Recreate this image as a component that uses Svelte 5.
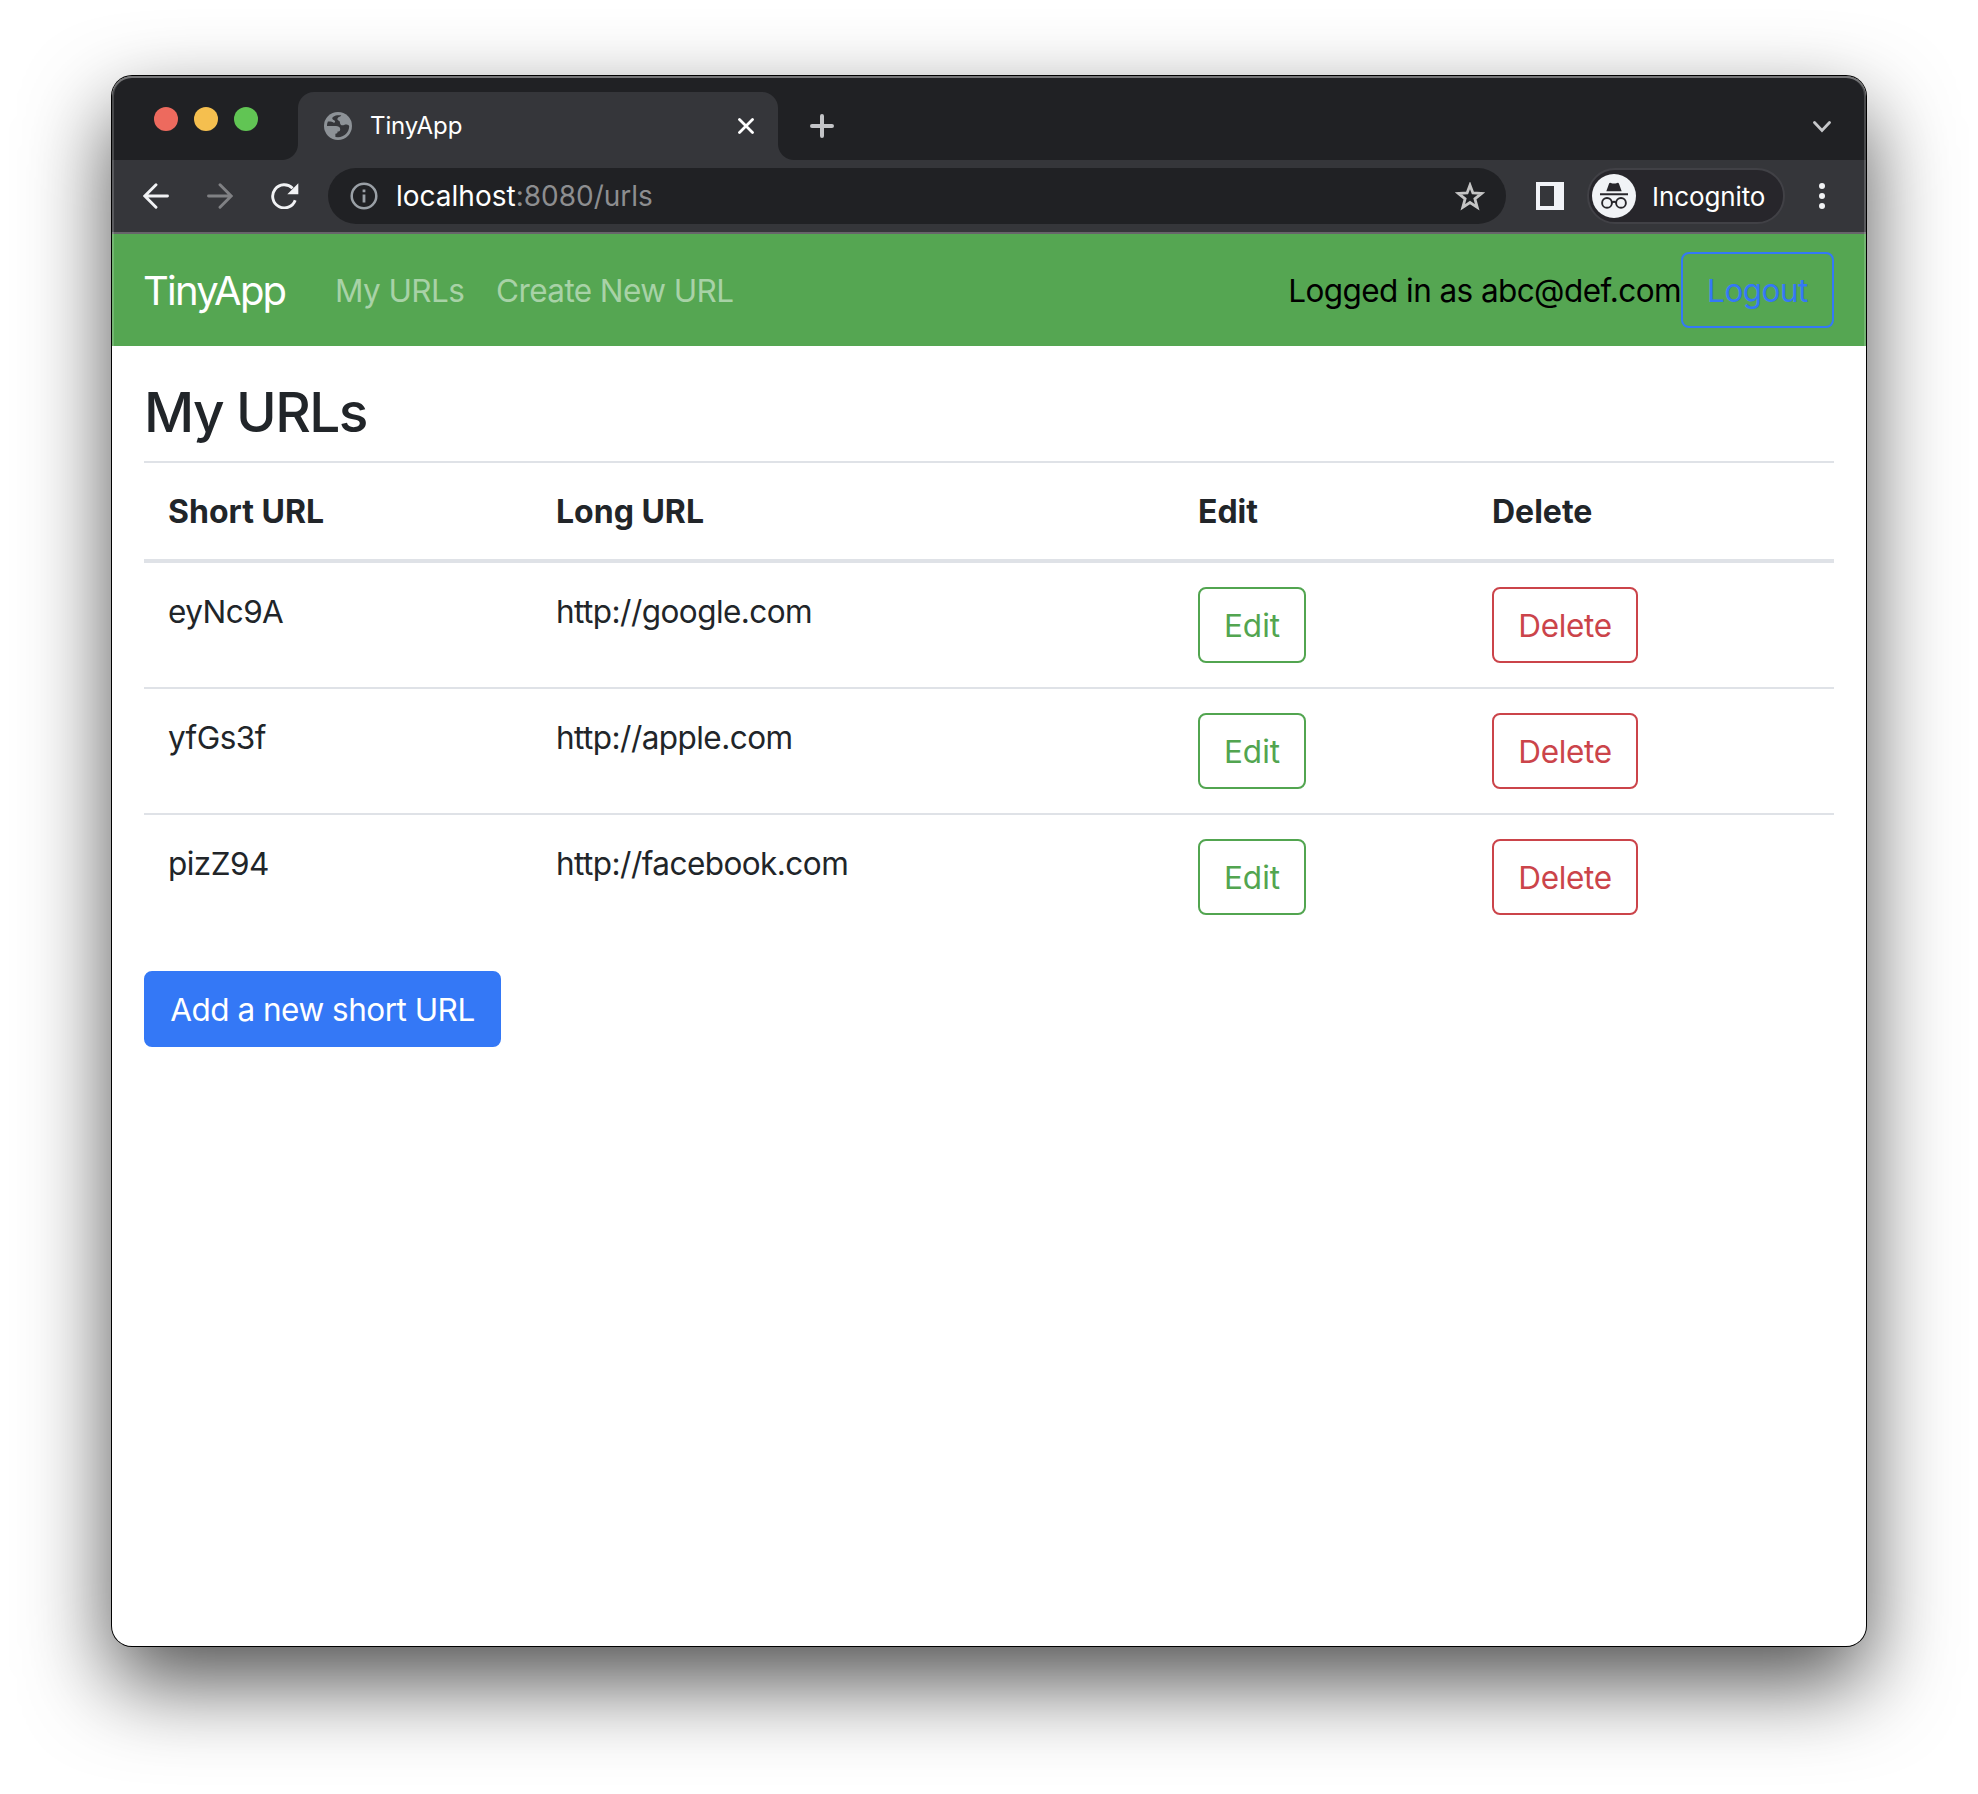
<script>
  const rows = [
    { short: 'eyNc9A', long: 'http://google.com' },
    { short: 'yfGs3f', long: 'http://apple.com' },
    { short: 'pizZ94', long: 'http://facebook.com' }
  ];
</script>

<div class="desktop">
  <div class="window">
    <div class="tabstrip">
      <div class="lights">
        <span class="light red"></span>
        <span class="light yellow"></span>
        <span class="light green"></span>
      </div>
      <div class="tab">
        <svg class="globe" viewBox="0 0 28 28">
          <circle cx="14" cy="14" r="14" fill="#8d9297" />
          <path d="M17.300 3.300C16.600 5 14.400 4.800 13.600 6.200C12.900 7.600 14 8.500 15.300 9C16.400 9.500 15.500 11.600 16.800 12.800C18.300 14.200 20.300 12.600 22 12.600C23.500 12.600 24.600 13.200 25.200 14C25.200 20.300 20.200 25.200 14 25.200L11.400 24.900L11.400 21.800C13 21.800 13.600 21 13.600 19.600C15.600 19.600 16.300 18.600 16.200 17C16 14.800 14 14 12 14L3 14C2.900 12.400 3.200 11 3.900 9.600C6 9.500 7.600 9.200 9 10.200C10.400 11.200 11.200 10.600 11 9.300C10.800 8 8.600 8.300 8.300 6.500C8 5 11 2.500 17.300 3.300Z" fill="#35363a" />
        </svg>
        <span class="tab-title">TinyApp</span>
        <svg class="close" viewBox="0 0 16 16"><path d="M1.500 1.500L14.500 14.500M14.500 1.500L1.500 14.500" stroke="#fff" stroke-width="2.800" stroke-linecap="round" /></svg>
      </div>
      <svg class="plus" viewBox="0 0 24 24"><path d="M12 2V22M2 12H22" stroke="#c3c4c7" stroke-width="4" stroke-linecap="round" /></svg>
      <svg class="chevron" viewBox="0 0 18 12"><path d="M1.500 1.500L9 9.500L16.500 1.500" fill="none" stroke="#c6c7ca" stroke-width="2.800" stroke-linecap="round" /></svg>
    </div>

    <div class="toolbar">
      <svg class="arrow" viewBox="0 0 26 26"><path d="M24.500 13H2M13 1.800L1.800 13L13 24.200" fill="none" stroke="#f1f2f4" stroke-width="2.900" stroke-linecap="round" /></svg>
      <svg class="arrow forward" viewBox="0 0 26 26"><path d="M1.500 13H24M13 1.800L24.200 13L13 24.200" fill="none" stroke="#808184" stroke-width="2.900" stroke-linecap="round" /></svg>
      <svg class="reload" viewBox="0 0 28 26"><path d="M24.200 17.200A11.600 11.600 0 1 1 21.600 5.200" fill="none" stroke="#f1f2f4" stroke-width="2.900" /><path d="M27.300 .3V11.300H16.300Z" fill="#f1f2f4" /></svg>
      <div class="omnibox">
        <svg class="info" viewBox="0 0 28 28"><circle cx="14" cy="14" r="12.300" fill="none" stroke="#9aa0a6" stroke-width="2.500" /><path d="M14 12.500V20.500M14 7.500V10.300" stroke="#9aa0a6" stroke-width="2.800" /></svg>
        <span class="url"><b>localhost</b>:8080/urls</span>
        <svg class="star" viewBox="0 0 30 29"><path d="M15 3.200L17.900 11L26.600 11.400L19.900 16.800L22.200 25.300L15 20.500L7.800 25.300L10.100 16.800L3.400 11.400L12.100 11Z" fill="none" stroke="#c4c4c4" stroke-width="2.800" /></svg>
      </div>
      <svg class="panel" viewBox="0 0 28 28"><path fill-rule="evenodd" d="M0 0H28V28H0ZM4 4V24H18V4Z" fill="#f1f3f7" /></svg>
      <div class="incognito">
        <svg class="spy" viewBox="0 0 44 44">
          <circle cx="22" cy="22" r="22" fill="#f1f3f6" />
          <path d="M14.300 17.300L17 9.800Q17.500 8.500 18.900 9Q22 10.200 25.100 9Q26.500 8.500 27 9.800L29.700 17.300Z" fill="#27262b" />
          <path d="M8 20.200H36" stroke="#27262b" stroke-width="2" />
          <g fill="none" stroke="#27262b" stroke-width="1.900"><circle cx="15" cy="28.900" r="4.900" /><circle cx="29" cy="28.900" r="4.900" /><path d="M19.800 28.700Q22 27 24.200 28.700" /></g>
        </svg>
        <span>Incognito</span>
      </div>
      <svg class="dots" viewBox="0 0 6 32"><g fill="#f1f2f4"><circle cx="3" cy="6" r="3" /><circle cx="3" cy="16" r="3" /><circle cx="3" cy="26" r="3" /></g></svg>
    </div>

    <nav class="navbar">
      <span class="brand">TinyApp</span>
      <span class="nav-link first">My URLs</span>
      <span class="nav-link second">Create New URL</span>
      <span class="account">Logged in as abc@def.com</span>
      <button class="btn logout">Logout</button>
    </nav>

    <main>
      <h3>My URLs</h3>
      <table>
        <colgroup><col class="c1" /><col class="c2" /><col class="c3" /><col class="c4" /></colgroup>
        <thead>
          <tr><th>Short URL</th><th>Long URL</th><th>Edit</th><th>Delete</th></tr>
        </thead>
        <tbody>
          {#each rows as row}
            <tr>
              <td>{row.short}</td>
              <td>{row.long}</td>
              <td class="action"><button class="btn edit">Edit</button></td>
              <td class="action"><button class="btn delete">Delete</button></td>
            </tr>
          {/each}
        </tbody>
      </table>
      <button class="btn add">Add a new short URL</button>
    </main>
  </div>
</div>

<style>
  :global(body) { background: #fff; }
  * { box-sizing: border-box; }
  svg { display: block; flex: none; }
  span, h3, button, td, th { white-space: nowrap; }
  .desktop {
    width: 1978px;
    height: 1794px;
    padding: 76px 112px 0;
    overflow: hidden;
    font-family: Inter, 'Liberation Sans', sans-serif;
    font-weight: 400;
  }
  .window {
    position: relative;
    display: flex;
    flex-direction: column;
    height: 1570px;
    border-radius: 20px;
    overflow: hidden;
    background: #fff;
    box-shadow: 0 0 0 1px #000, 0 36px 86px rgba(0, 0, 0, .69);
  }
  /* light rim that lies over the window's edge */
  .window::after {
    content: '';
    position: absolute;
    inset: 0;
    border-radius: 20px;
    box-shadow: inset 0 2px 0 rgba(255, 255, 255, .25), inset 0 0 0 2px rgba(255, 255, 255, .18);
    pointer-events: none;
  }
  .tabstrip {
    display: flex;
    flex: none;
    height: 84px;
    padding-left: 42px;
    background: #202124;
  }
  .lights { display: flex; gap: 16px; width: 144px; padding-top: 31px; }
  .light { width: 24px; height: 24px; border-radius: 50%; }
  .red { background: #ed6a5e; }
  .yellow { background: #f5bf4f; }
  .green { background: #61c554; }
  .tab {
    position: relative;
    display: flex;
    align-items: center;
    width: 480px;
    height: 68px;
    margin-top: 16px;
    padding: 0 24px 0 26px;
    border-radius: 16px 16px 0 0;
    background: #35363a;
  }
  .tab::before, .tab::after {
    content: '';
    position: absolute;
    bottom: 0;
    width: 16px;
    height: 16px;
  }
  .tab::before { left: -16px; background: radial-gradient(circle at 0 0, #202124 15.500px, #35363a 16.500px); }
  .tab::after { right: -16px; background: radial-gradient(circle at 100% 0, #202124 15.500px, #35363a 16.500px); }
  .globe { width: 28px; height: 28px; }
  .tab-title { margin-left: 18px; padding-bottom: 2px; color: #fff; font-size: 24px; letter-spacing: -.1px; }
  .close { width: 16px; height: 16px; margin-left: auto; }
  .plus { width: 24px; height: 24px; margin: 38px 0 0 32px; }
  .chevron { width: 18px; height: 12px; margin: 45px 35px 0 auto; }
  .toolbar {
    display: flex;
    flex: none;
    align-items: center;
    height: 74px;
    padding-left: 31px;
    border-bottom: 2px solid #67646a;
    background: #35363a;
  }
  .arrow { width: 26px; height: 26px; }
  .forward { margin-left: 38px; }
  .reload { width: 28px; height: 26px; margin-left: 38px; }
  .omnibox {
    display: flex;
    align-items: center;
    width: 1178px;
    height: 56px;
    margin-left: 29px;
    padding: 0 21px 0 22px;
    border-radius: 28px;
    background: #202124;
  }
  .info { width: 28px; height: 28px; }
  .url { margin-left: 18px; color: #8d8e90; font-size: 28px; }
  .url b { color: #fff; font-weight: inherit; }
  .star { width: 30px; height: 29px; margin-left: auto; }
  .panel { width: 28px; height: 28px; margin-left: 30px; }
  .incognito {
    display: flex;
    align-items: center;
    width: 198px;
    height: 56px;
    margin-left: 23px;
    padding-left: 3px;
    border: 2px solid #414146;
    border-radius: 28px;
    background: #27262b;
    color: #fff;
    font-size: 26px;
    letter-spacing: -.1px;
  }
  .spy { width: 44px; height: 44px; margin-right: 16px; }
  .dots { width: 6px; height: 32px; margin-left: 34px; }
  .navbar {
    display: flex;
    flex: none;
    align-items: center;
    height: 112px;
    padding: 0 32px;
    background: #55a652;
    font-size: 31.500px;
    letter-spacing: -.58px;
  }
  .brand { width: 191px; color: #fff; font-size: 40px; letter-spacing: -1.800px; text-indent: -1px; }
  .nav-link, .account { padding-top: 1px; }
  .nav-link { color: #a8d2a7; }
  .first { width: 161px; }
  .account { margin-left: auto; color: #000; }
  .btn {
    display: flex;
    align-items: center;
    justify-content: center;
    height: 76px;
    padding: 1px 0 0;
    border: 2px solid;
    border-radius: 8px;
    background: transparent;
    font-family: inherit;
    font-size: 31.500px;
    font-weight: inherit;
    letter-spacing: -.5px;
  }
  .logout { width: 153px; color: #3478f6; }
  main { padding: 32px; color: #212529; }
  h3 { height: 67px; margin: 0 0 16px; padding-top: 1px; font-size: 55px; font-weight: 500; line-height: 67px; letter-spacing: -1.600px; }
  table { width: 1690px; border-collapse: separate; border-spacing: 0; table-layout: fixed; }
  .c1 { width: 388px; }
  .c2 { width: 642px; }
  .c3 { width: 294px; }
  .c4 { width: 366px; }
  th, td {
    padding: 25px 24px 23px;
    border-top: 2px solid #dfe2e7;
    text-align: left;
    vertical-align: top;
    line-height: 48px;
  }
  th { border-bottom: 4px solid #dfe2e7; font-size: 32px; font-weight: 700; }
  td { font-size: 31.500px; letter-spacing: -.55px; }
  td.action { padding: 24px; }
  tbody tr:first-child td { border-top: 0; }
  .edit { width: 108px; color: #52a550; letter-spacing: 0; }
  .delete { width: 146px; color: #cb444a; letter-spacing: -.35px; }
  .add { width: 357px; margin-top: 32px; border-color: #3478f6; background: #3478f6; color: #fff; }
</style>
